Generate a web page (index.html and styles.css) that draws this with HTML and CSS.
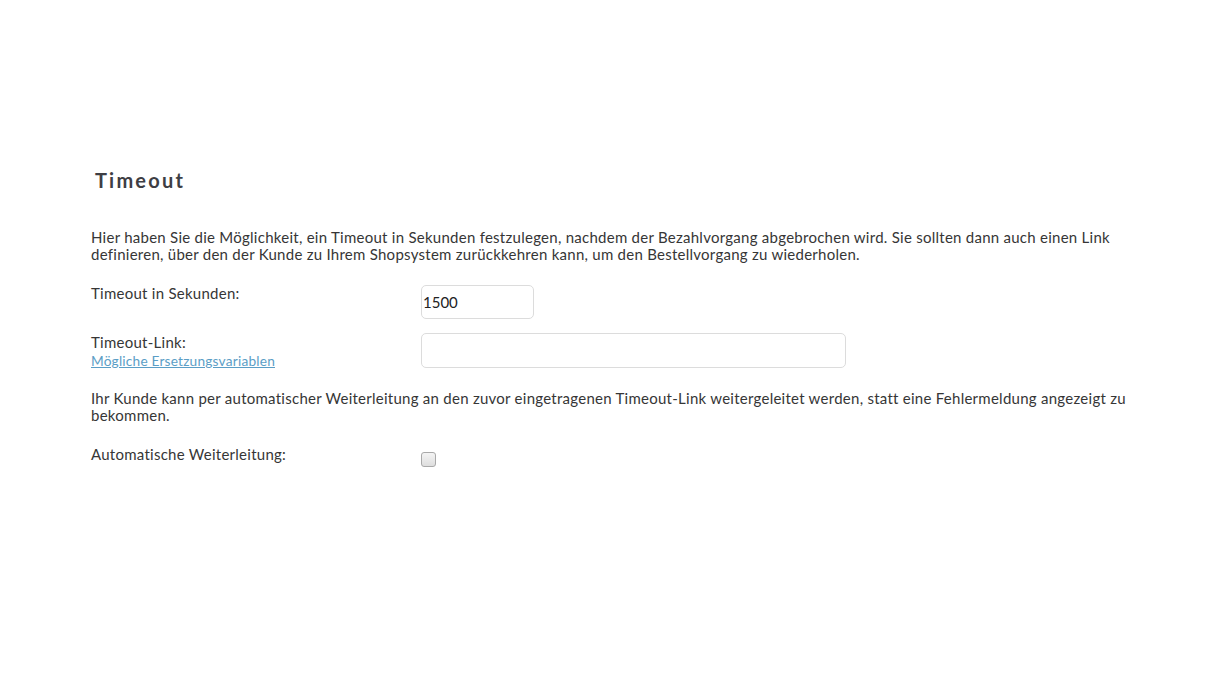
FILE: index.html
```html
<!DOCTYPE html>
<html lang="de">
<head>
<meta charset="utf-8">
<title>Timeout</title>
<link rel="stylesheet" href="styles.css">
</head>
<body>
<div class="page">
  <h2 class="title">Timeout</h2>
  <p class="text">Hier haben Sie die Möglichkeit, ein Timeout in Sekunden festzulegen, nachdem der Bezahlvorgang abgebrochen wird. Sie sollten dann auch einen Link definieren, über den der Kunde zu Ihrem Shopsystem zurückkehren kann, um den Bestellvorgang zu wiederholen.</p>
  <div class="row row-first">
    <div class="label">Timeout in Sekunden:</div>
    <input class="field field-short" type="text" value="1500">
  </div>
  <div class="row row-second">
    <div class="label label-two">Timeout-Link:<br><a class="link" href="#">Mögliche Ersetzungsvariablen</a></div>
    <input class="field field-long" type="text" value="">
  </div>
  <p class="text text-second">Ihr Kunde kann per automatischer Weiterleitung an den zuvor eingetragenen Timeout-Link weitergeleitet werden, statt eine Fehlermeldung angezeigt zu bekommen.</p>
  <div class="row row-check">
    <div class="label">Automatische Weiterleitung:</div>
    <span class="check"></span>
  </div>
</div>
</body>
</html>
```
FILE: styles.css
```css
html, body {
  margin: 0;
  padding: 0;
  background: #ffffff;
}
body {
  font-family: Lato, "Open Sans", sans-serif;
  font-size: 15px;
  letter-spacing: 0.26px;
  line-height: 17px;
  color: #363636;
}
.page {
  padding: 167px 80px 0 91px;
}
.title {
  margin: 0 0 0 4px;
  font-size: 20px;
  line-height: 26px;
  font-weight: 700;
  letter-spacing: 2.2px;
  color: #3e3e44;
}
.text {
  margin: 36px 0 0 0;
  max-width: 1032px;
}
.text-second {
  margin-top: 20px;
  max-width: 1045px;
}
.row {
  display: grid;
  grid-template-columns: 330px auto;
  align-items: start;
}
.row-first {
  margin-top: 22px;
}
.row-second {
  margin-top: 14px;
}
.row-check {
  margin-top: 22px;
}
.label-two {
  line-height: 18px;
}
.link {
  color: #5b9ec6;
  text-decoration: underline;
  font-size: 13.7px;
  letter-spacing: 0.2px;
}
.field {
  box-sizing: border-box;
  height: 34px;
  border: 1px solid #dcdcdc;
  border-radius: 5px;
  padding: 0 0 0 1px;
  font-family: Lato, "Open Sans", sans-serif;
  font-size: 15px;
  color: #222222;
  background: #ffffff;
  outline: none;
}
.field-short {
  width: 113px;
}
.field-long {
  width: 425px;
  height: 35px;
}
.check {
  display: block;
  box-sizing: border-box;
  width: 15px;
  height: 15px;
  margin-top: 6px;
  border: 1px solid #a9a9a9;
  border-radius: 3px;
  background: linear-gradient(#f4f4f4, #dedede);
}
```
